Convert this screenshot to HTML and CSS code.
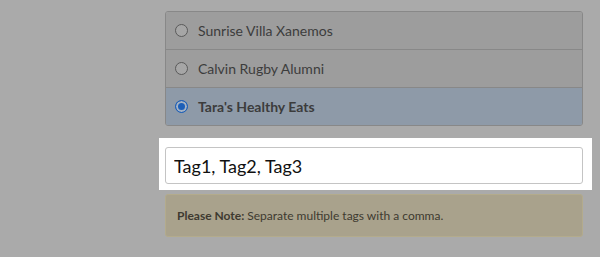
FILE: index.html
```html
<!DOCTYPE html>
<html>
<head>
    <meta charset="utf-8">
    <title>Tags</title>
    <link rel="stylesheet" href="styles.css">
</head>
<body>
    <div class="panel">
        <ul class="choices">
            <li class="choice">
                <span class="radio"></span>
                <span class="label">Sunrise Villa Xanemos</span>
            </li>
            <li class="choice">
                <span class="radio"></span>
                <span class="label">Calvin Rugby Alumni</span>
            </li>
            <li class="choice selected">
                <span class="radio checked"></span>
                <span class="label">Tara's Healthy Eats</span>
            </li>
        </ul>

        <div class="spotlight">
            <input class="tags" type="text" value="Tag1, Tag2, Tag3">
        </div>

        <div class="note">
            <b>Please Note:</b> Separate multiple tags with a comma.
        </div>
    </div>
</body>
</html>
```

FILE: styles.css
```css
* {
    margin: 0;
    padding: 0;
    box-sizing: border-box;
}
body {
    background: #aaaaaa;
    font-family: "Source Sans Pro", "Lato", "Noto Sans", sans-serif;
    color: #3c3c3c;
}
.panel {
    width: 418px;
    margin: 11px 0 0 165px;
}
.choices {
    list-style: none;
    border: 1px solid #888888;
    border-radius: 3px;
    overflow: hidden;
}
.choice {
    display: flex;
    align-items: center;
    height: 38px;
    padding-left: 9px;
    background: #9d9d9d;
    border-top: 1px solid #888888;
    font-size: 14px;
}
.choice:first-child {
    border-top: 0;
    height: 37px;
}
.choice.selected {
    background: #8e9aa8;
    font-weight: bold;
}
.radio {
    width: 13px;
    height: 13px;
    border: 1px solid #5a5a5a;
    border-radius: 50%;
    background: #a6a6a6;
    margin-right: 10px;
    flex-shrink: 0;
}
.radio.checked {
    border-color: #1c5fb8;
    background: #1c5fb8;
    box-shadow: inset 0 0 0 2px #a4b2c4;
}
.spotlight {
    background: #ffffff;
    margin: 12px -9px 0 -6px;
    padding: 9px 9px 6px 6px;
}
.tags {
    display: block;
    width: 100%;
    height: 37px;
    border: 1px solid #c4c4c4;
    border-radius: 3px;
    padding: 0 8px;
    font-family: inherit;
    font-size: 18px;
    color: #111111;
    outline: none;
}
.note {
    margin-top: 4px;
    height: 43px;
    display: flex;
    align-items: center;
    padding-left: 11px;
    background: #a9a28c;
    border: 1px solid #b3ab8c;
    border-radius: 3px;
    font-size: 12px;
    color: #3e3a30;
}
.note b {
    margin-right: 3px;
}
```
